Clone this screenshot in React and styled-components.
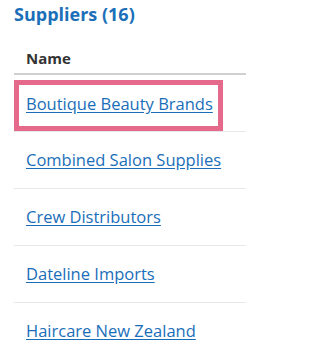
import styled, { createGlobalStyle } from 'styled-components';

const GlobalStyle = createGlobalStyle`
	body {
		margin: 0;
		background: #fff;
		font-family: 'Open Sans', 'Noto Sans', sans-serif;
	}
`;

const Page = styled.div`
	width: 246px;
	height: 353px;
	overflow: hidden;
	padding: 2px 0 0 14px;
	box-sizing: border-box;
`;

const Title = styled.h2`
	margin: 0;
	font-size: 18px;
	line-height: 24px;
	font-weight: 700;
	color: #1b6fb9;
`;

const Table = styled.div`
	width: 260px;
	margin-top: 16px;
`;

const HeaderRow = styled.div`
	display: flex;
	align-items: center;
	height: 31px;
	padding-left: 12px;
	border-bottom: 2px solid #d0d0d0;
	font-size: 15px;
	font-weight: 700;
	color: #333;
`;

const Row = styled.div`
	display: flex;
	align-items: ${({ $selected }) => ($selected ? 'flex-end' : 'center')};
	height: 56px;
	padding-left: ${({ $selected }) => ($selected ? '0' : '12px')};
	border-bottom: 1px solid #e8e8e8;
`;

const Focus = styled.div`
	display: flex;
	align-items: center;
	box-sizing: border-box;
	width: 209px;
	height: 51px;
	padding: 0 0 3px 7px;
	border: 5px solid #e5698b;
`;

const Link = styled.a`
	font-size: 16.5px;
	line-height: 20px;
	color: #1a6eb9;
	text-decoration: underline;
	text-underline-offset: 2px;
	cursor: pointer;
	white-space: nowrap;
`;

const suppliers = [
	'Boutique Beauty Brands',
	'Combined Salon Supplies',
	'Crew Distributors',
	'Dateline Imports',
	'Haircare New Zealand',
];

export default function App() {
	return (
		<>
			<GlobalStyle />
			<Page>
				<Title>Suppliers (16)</Title>
				<Table role='table'>
					<HeaderRow role='row'>Name</HeaderRow>
					{suppliers.map((name, i) => (
						<Row role='row' key={name} $selected={i === 0}>
							{i === 0 ? (
								<Focus>
									<Link href='#'>{name}</Link>
								</Focus>
							) : (
								<Link href='#'>{name}</Link>
							)}
						</Row>
					))}
				</Table>
			</Page>
		</>
	);
}
